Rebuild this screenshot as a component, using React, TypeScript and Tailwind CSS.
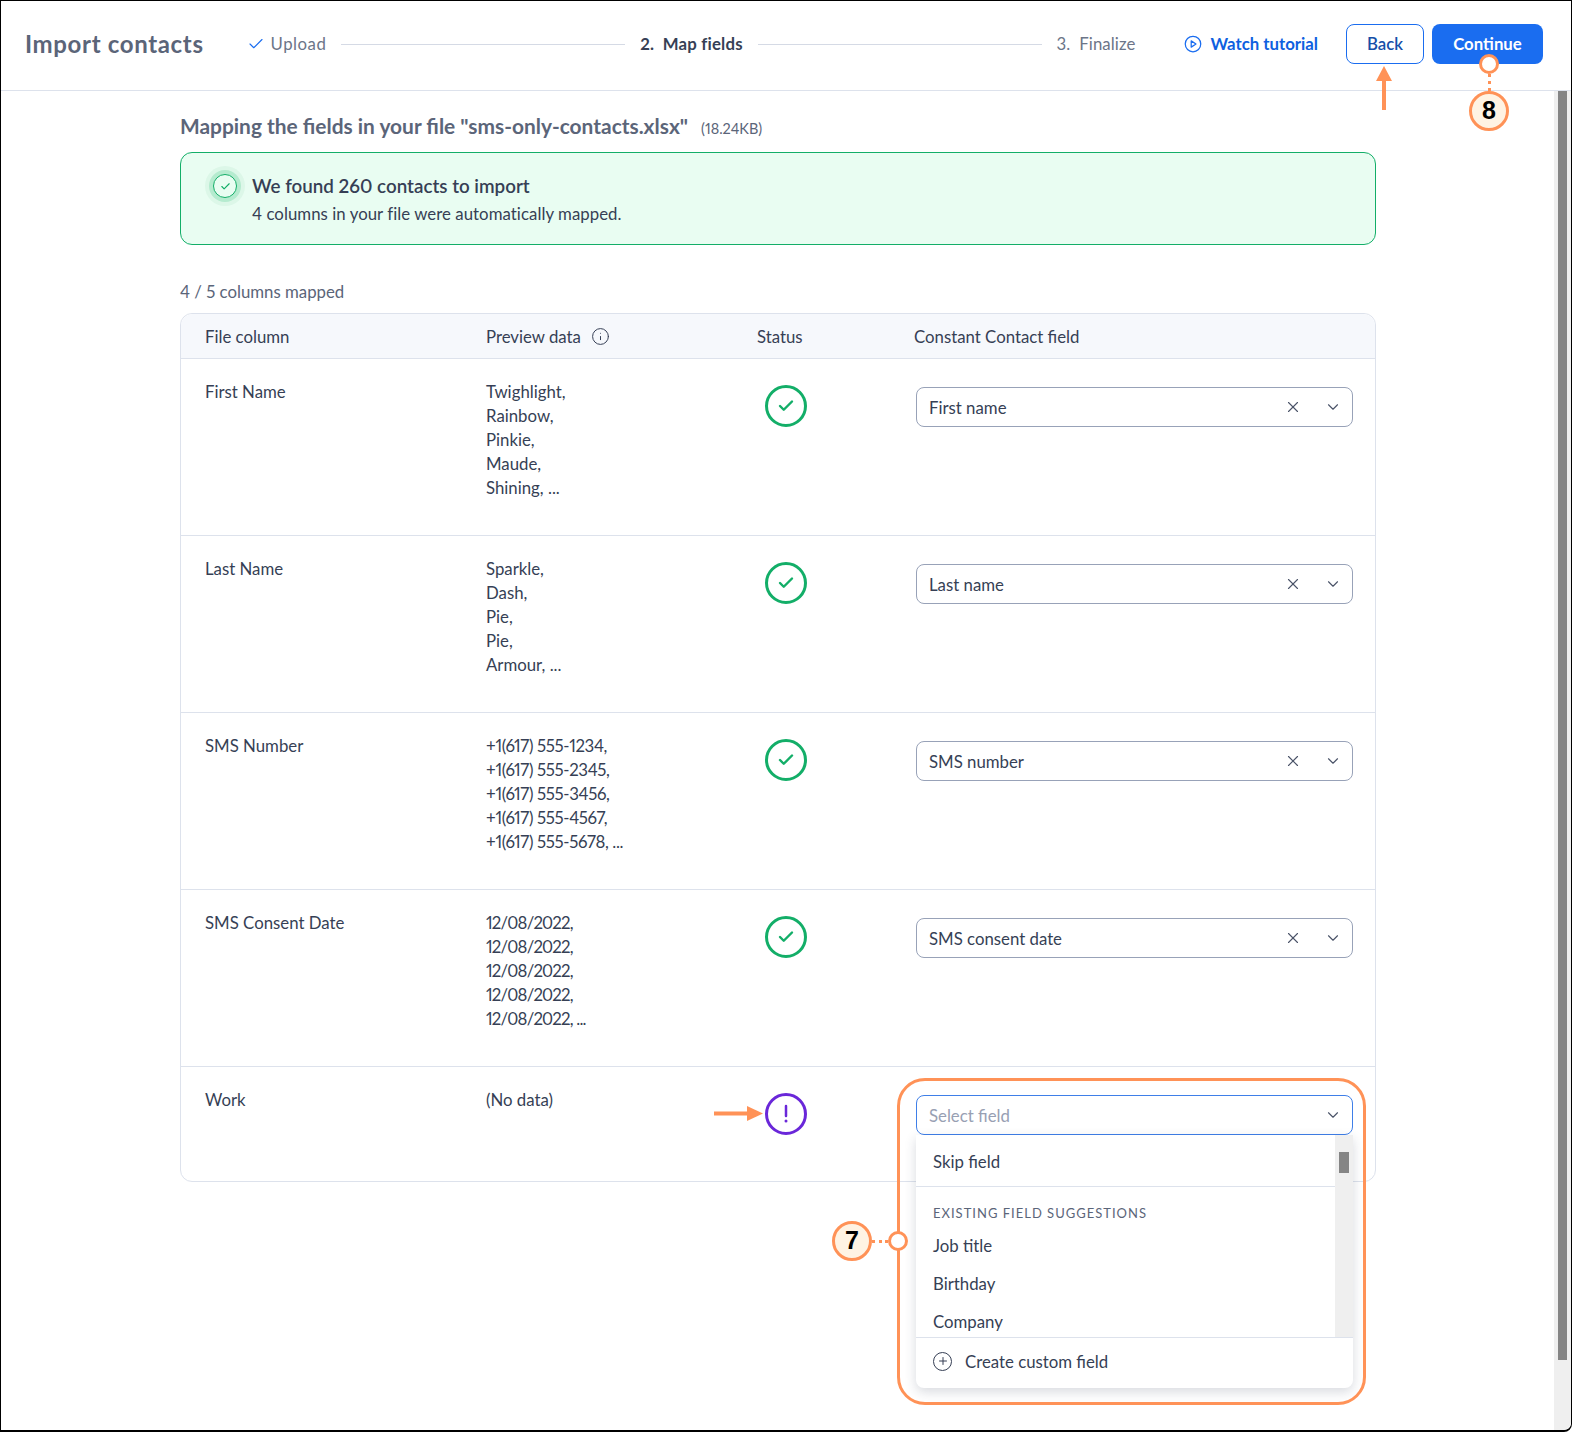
import React from "react";
import { Check, X, ChevronDown, Info, Plus } from "lucide-react";

const rows = [
  { col: "First Name", preview: ["Twighlight,", "Rainbow,", "Pinkie,", "Maude,", "Shining, ..."], field: "First name", tight: "" },
  { col: "Last Name", preview: ["Sparkle,", "Dash,", "Pie,", "Pie,", "Armour, ..."], field: "Last name", tight: "" },
  { col: "SMS Number", preview: ["+1(617) 555-1234,", "+1(617) 555-2345,", "+1(617) 555-3456,", "+1(617) 555-4567,", "+1(617) 555-5678, ..."], field: "SMS number", tight: "tracking-[-0.35px]" },
  { col: "SMS Consent Date", preview: ["12/08/2022,", "12/08/2022,", "12/08/2022,", "12/08/2022,", "12/08/2022, ..."], field: "SMS consent date", tight: "tracking-[-0.8px]" },
];

function Badge({ n }: { n: string }) {
  return (
    <div className="w-[40px] h-[40px] rounded-full border-[3px] border-[#ff9257] bg-[#fff3e3] flex items-center justify-center text-[25px] font-bold text-black font-['Liberation_Sans',sans-serif]">
      {n}
    </div>
  );
}

function Ring() {
  return <div className="w-[20px] h-[20px] rounded-full border-[3px] border-[#ff9257] bg-white" />;
}

function FieldSelect({ label }: { label: string }) {
  return (
    <div className="h-[40px] rounded-[8px] border border-[#98a2b8] bg-white flex items-center pl-[12px] pr-[10px] text-[#363f55]">
      <span className="flex-1">{label}</span>
      <X size={18} strokeWidth={1.5} className="mr-[22px] text-[#4a5368]" />
      <ChevronDown size={18} strokeWidth={1.5} className="text-[#4a5368]" />
    </div>
  );
}

function StatusOk() {
  return (
    <div className="w-[42px] h-[42px] rounded-full border-[3px] border-[#13ae68] bg-white flex items-center justify-center">
      <Check size={18} strokeWidth={3.25} className="text-[#13ae68]" />
    </div>
  );
}

export default function App() {
  return (
    <div className="relative w-[1572px] h-[1432px] overflow-hidden bg-white border border-black border-b-[2px] rounded-br-[8px] flex flex-col font-['Lato',sans-serif] text-[16.8px] proportional-nums text-[#363f55]">
      <header className="h-[90px] shrink-0 border-b border-[#dde2ec] flex items-center pl-[24px] pr-[28px] pb-[4px]">
        <h1 className="text-[24px] font-bold text-[#5b6579] tracking-[0.65px] mr-[43px]">Import contacts</h1>
        <div className="flex-1 flex items-center mr-[49px] mt-[1px]">
          <Check size={18} strokeWidth={1.5} className="text-[#1a6df0] mr-[6px]" />
          <span className="text-[#6c7588] mr-[15px] tracking-[0.5px]">Upload</span>
          <div className="flex-1 h-px bg-[#d5dae5]" />
          <span className="font-bold text-[#363f55] mx-[15px] whitespace-pre tracking-[0.2px]">2.  Map fields</span>
          <div className="flex-1 h-px bg-[#d5dae5]" />
          <span className="text-[#6c7588] ml-[15px] whitespace-pre tracking-[0.1px]">3.  Finalize</span>
        </div>
        <svg width="18" height="18" viewBox="0 0 18 18" fill="none" className="mr-[8px]">
          <circle cx="9" cy="9" r="7.75" stroke="#1a6df0" strokeWidth="1.25" />
          <path d="M7.2 5.9 L12 9 L7.2 12.1 Z" stroke="#1a6df0" strokeWidth="1.25" strokeLinejoin="round" />
        </svg>
        <span className="font-bold text-[#0e5fe0] mr-[28px]">Watch tutorial</span>
        <button className="w-[78px] h-[40px] rounded-[8px] border border-[#1a6df0] text-[#164fa8] font-semibold bg-white mr-[8px]">Back</button>
        <button className="w-[111px] h-[40px] rounded-[8px] bg-[#1a6df0] text-white font-bold">Continue</button>
      </header>

      <div className="flex-1 flex min-h-0">
        <main className="flex-1 pl-[179px] pr-[178px]">
          <div className="flex items-baseline mt-[19px]">
            <h2 className="text-[20.9px] font-bold text-[#5b6579]">Mapping the fields in your file "sms-only-contacts.xlsx"</h2>
            <span className="text-[14.5px] text-[#5b6579] ml-[13px]">(18.24KB)</span>
          </div>
          <div className="mt-[11px] h-[93px] rounded-[12px] border border-[#13ae68] bg-[#e9fdf2] flex pl-[24px] pt-[13px]">
            <div className="w-[40px] h-[40px] rounded-full bg-[#dcf7e8] flex items-center justify-center">
              <div className="w-[32px] h-[32px] rounded-full bg-[#b5ebcf] flex items-center justify-center">
                <div className="w-[24px] h-[24px] rounded-full border-[1.5px] border-[#13ae68] bg-[#e9fdf2] flex items-center justify-center">
                  <Check size={11} strokeWidth={2.5} className="text-[#13ae68]" />
                </div>
              </div>
            </div>
            <div className="ml-[7px]">
              <div className="text-[18.8px] font-semibold leading-[24px] mt-[8px]">We found 260 contacts to import</div>
              <div className="leading-[24px] mt-[4px] tracking-[0.05px]">4 columns in your file were automatically mapped.</div>
            </div>
          </div>

          <div className="mt-[35px] text-[#5b6579] leading-[24px]">4 / 5 columns mapped</div>

          <div className="mt-[9px] rounded-[12px] border border-[#dde2ec]">
            <div className="h-[45px] bg-[#f6f8fc] rounded-t-[12px] border-b border-[#dde2ec] grid grid-cols-[281px_271px_157px_1fr] items-center pl-[24px]">
              <div>File column</div>
              <div className="flex items-center gap-[10px] pt-[1px]">
                Preview data <Info size={19} strokeWidth={1.25} />
              </div>
              <div>Status</div>
              <div>Constant Contact field</div>
            </div>
            {rows.map((r) => (
              <div key={r.col} className="h-[177px] border-b border-[#dde2ec] grid grid-cols-[281px_271px_157px_1fr] pl-[24px] pr-[22px]">
                <div className="pt-[21px] leading-[24px]">{r.col}</div>
                <div className={r.tight ? "pt-[21px] leading-[24px] " + r.tight : "pt-[21px] leading-[24px]"}>
                  {r.preview.map((p, i) => (
                    <div key={i}>{p}</div>
                  ))}
                </div>
                <div className="pt-[26px] pl-[8px]">
                  <StatusOk />
                </div>
                <div className="pt-[28px] pl-[2px]">
                  <FieldSelect label={r.field} />
                </div>
              </div>
            ))}
            <div className="h-[114px] grid grid-cols-[281px_271px_157px_1fr] pl-[24px] pr-[22px]">
              <div className="pt-[21px] leading-[24px]">Work</div>
              <div className="pt-[21px] leading-[24px]">(No data)</div>
              <div className="pt-[26px] pl-[8px]">
                <div className="relative w-[42px] h-[42px] rounded-full border-[3px] border-[#6a27d9] flex items-center justify-center bg-white">
                  <svg width="6" height="20" viewBox="0 0 6 20">
                    <path d="M3 2 V12" stroke="#6a27d9" strokeWidth="2.5" strokeLinecap="round" />
                    <circle cx="3" cy="17" r="1.5" fill="#6a27d9" />
                  </svg>
                  <svg width="50" height="15" viewBox="0 0 50 15" className="absolute left-[-54px] top-[10px]">
                    <path d="M0 7.5 H34" stroke="#ff9257" strokeWidth="4" />
                    <path d="M33 0 L49 7.5 L33 15 Z" fill="#ff9257" />
                  </svg>
                </div>
              </div>
              <div className="pt-[28px] pl-[2px] relative">
                <div className="relative z-10 h-[40px] rounded-[8px] border border-[#3f7fe8] bg-white flex items-center pl-[12px] pr-[10px] text-[#98a0b3]">
                  <span className="flex-1">Select field</span>
                  <ChevronDown size={18} strokeWidth={1.5} className="text-[#4a5368]" />
                </div>
                <div className="absolute left-[2px] right-0 top-[68px] h-[253px] z-10 bg-white rounded-b-[8px] shadow-[0_4px_12px_rgba(40,50,80,0.18)] flex flex-col overflow-hidden">
                  <div className="flex-1 flex min-h-0">
                    <div className="flex-1">
                      <div className="h-[52px] border-b border-[#dde2ec] pl-[17px] pt-[1px] flex items-center">Skip field</div>
                      <div className="pl-[17px] pt-[17px] text-[13px] tracking-[1px] text-[#5b6579] leading-[18px]">EXISTING FIELD SUGGESTIONS</div>
                      <div className="pl-[17px] mt-[12px] leading-[24px]">Job title</div>
                      <div className="pl-[17px] mt-[14px] leading-[24px]">Birthday</div>
                      <div className="pl-[17px] mt-[14px] leading-[24px]">Company</div>
                    </div>
                    <div className="w-[18px] bg-[#efefef] pt-[17px] pl-[4px]">
                      <div className="w-[10px] h-[21px] bg-[#858585]" />
                    </div>
                  </div>
                  <div className="h-[51px] border-t border-[#dde2ec] pl-[17px] pb-[4px] flex items-center">
                    <span className="w-[19px] h-[19px] rounded-full border-[1.5px] border-[#363f55] flex items-center justify-center mr-[13px]">
                      <Plus size={12} strokeWidth={2} />
                    </span>
                    Create custom field
                  </div>
                </div>
              </div>
            </div>
          </div>
        </main>
        <div className="w-[17px] bg-[#efefef] pl-[4px] rounded-br-[8px]">
          <div className="w-[9px] h-[1269px] bg-[#858585]" />
        </div>
      </div>

      {/* annotations */}
      <div className="absolute left-[896px] top-[1077px] w-[469px] h-[327px] rounded-[28px] border-[3px] border-[#ff9257] z-20 pointer-events-none" />
      <div className="absolute left-[831px] top-[1220px] z-30 flex items-center">
        <Badge n="7" />
        <div className="w-[16px] border-t-[3px] border-dotted border-[#ff9257]" />
        <Ring />
      </div>
      <div className="absolute left-[1468px] top-[53px] z-30 flex flex-col items-center">
        <Ring />
        <div className="h-[17px] border-l-[3px] border-dotted border-[#ff9257]" />
        <Badge n="8" />
      </div>
      <svg width="16" height="44" viewBox="0 0 16 44" className="absolute left-[1375px] top-[65px] z-30">
        <path d="M8 14 V44" stroke="#ff9257" strokeWidth="4" />
        <path d="M0 15 L8 0 L16 15 Z" fill="#ff9257" />
      </svg>
    </div>
  );
}
